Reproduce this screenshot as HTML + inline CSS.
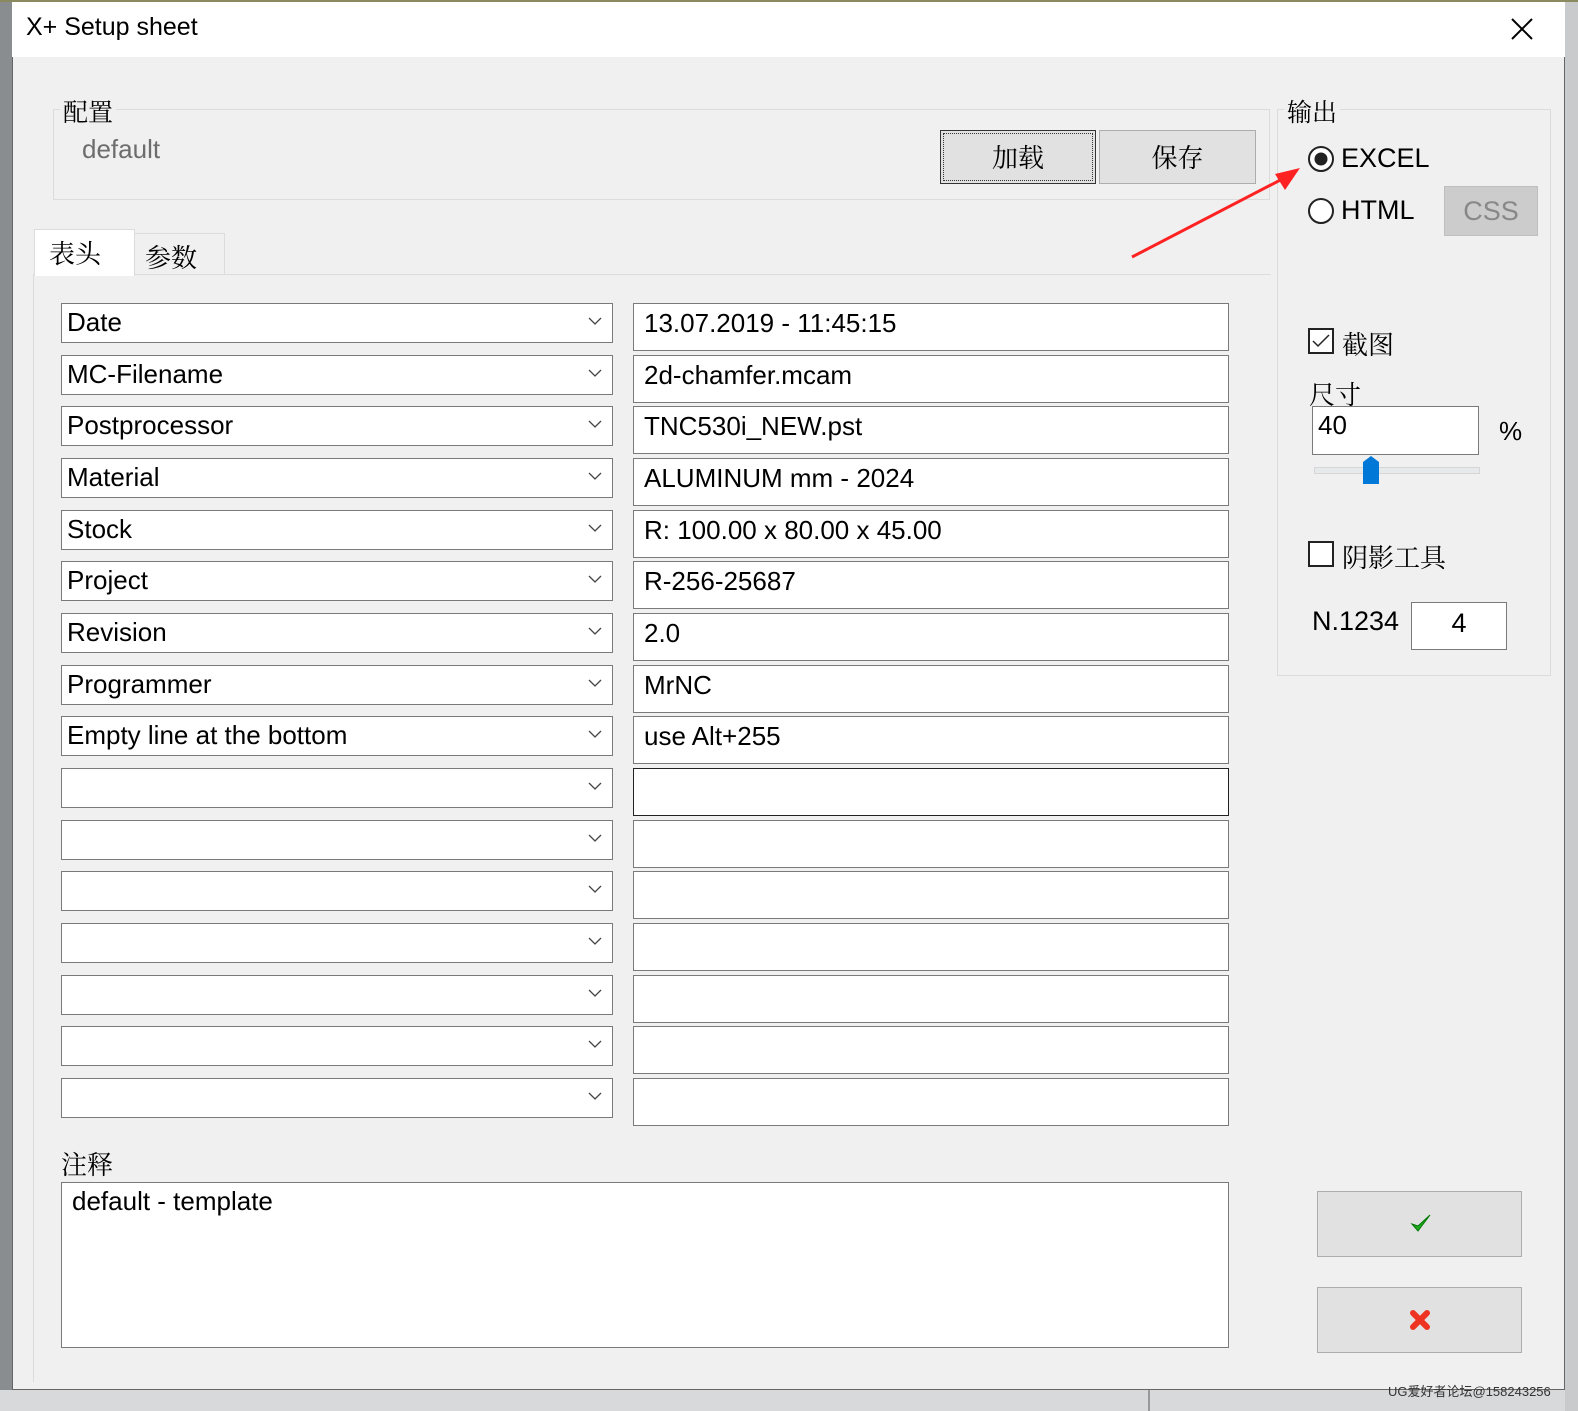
<html><head><style>
body{margin:0;width:1578px;height:1411px;background:#8a8d90;position:relative;overflow:hidden;font-family:"Liberation Sans","Noto Sans CJK SC",sans-serif;}
.a{position:absolute;box-sizing:border-box}
.win{left:12px;top:0;width:1553px;height:1390px;background:#f0f0f0;border:1px solid #666;border-top:none}
.tb{left:12px;top:0;width:1553px;height:57px;background:#fff}
.cb{background:#fff;border:1px solid #7a7a7a;height:40px;width:552px;left:61px;font-size:26px;padding:3px 0 0 5px}
.tx{background:#fff;border:1px solid #7a7a7a;height:48px;width:596px;left:633px;font-size:26px;padding:4px 0 0 10px}
.ar{position:absolute;right:10px;top:12px}
.btn{background:#e1e1e1;border:1px solid #adadad;text-align:center}
.cj{font-family:"Noto Serif CJK SC","Noto Sans CJK SC",serif}
</style></head><body>
<div class="a" style="left:0;top:1390px;width:1578px;height:21px;background:#d8d9da"></div>
<div class="a" style="left:1148px;top:1390px;width:2px;height:21px;background:#999"></div>
<div class="a" style="left:1565px;top:0;width:13px;height:1411px;background:#c8cacc"></div>
<div class="a win"></div>
<div class="a tb"></div>
<div class="a" style="left:0;top:0;width:1578px;height:2px;background:#8b8a5e"></div>
<div class="a" style="left:26px;top:13px;font-size:25px">X+ Setup sheet</div>
<svg class="a" style="left:1510px;top:17px" width="24" height="24"><path d="M2 2L22 22M22 2L2 22" stroke="#000" stroke-width="2"/></svg>
<div class="a" style="left:53px;top:109px;width:1217px;height:91px;border:1px solid #dcdcdc"></div>
<div class="a cj" style="left:60px;top:93px;font-size:25px;background:#f0f0f0;padding:0 3px">配置</div>
<div class="a" style="left:82px;top:134px;font-size:26px;color:#6d6d6d">default</div>
<div class="a btn cj" style="left:940px;top:130px;width:156px;height:54px;font-size:26px;line-height:52px;border:1px solid #333;outline:1px dotted #333;outline-offset:-4px">加载</div>
<div class="a btn cj" style="left:1099px;top:130px;width:157px;height:54px;font-size:26px;line-height:52px">保存</div>
<div class="a" style="left:1277px;top:109px;width:274px;height:567px;border:1px solid #dcdcdc"></div>
<div class="a cj" style="left:1284px;top:93px;font-size:25px;background:#f0f0f0;padding:0 3px">输出</div>
<svg class="a" style="left:1130px;top:160px" width="180" height="100"><path d="M2 97L160 15" stroke="#f22" stroke-width="3"/><path d="M170 8L145 14L155 30Z" fill="#f22"/></svg>
<svg class="a" style="left:1307px;top:145px" width="28" height="28"><circle cx="14" cy="14" r="12" fill="#fff" stroke="#222" stroke-width="2"/><circle cx="14" cy="14" r="6.5" fill="#222"/></svg>
<div class="a" style="left:1341px;top:143px;font-size:27px">EXCEL</div>
<svg class="a" style="left:1307px;top:197px" width="28" height="28"><circle cx="14" cy="14" r="12" fill="#fff" stroke="#222" stroke-width="2"/></svg>
<div class="a" style="left:1341px;top:195px;font-size:27px">HTML</div>
<div class="a" style="left:1444px;top:186px;width:94px;height:50px;background:#ccc;border:1px solid #bfbfbf;color:#888;font-size:27px;text-align:center;line-height:48px">CSS</div>
<svg class="a" style="left:1308px;top:328px" width="27" height="27"><rect x="1" y="1" width="24" height="24" fill="#fff" stroke="#222" stroke-width="2"/><path d="M5 13L10 18L21 7" stroke="#222" stroke-width="1.5" fill="none"/></svg>
<div class="a cj" style="left:1342px;top:325px;font-size:26px">截图</div>
<div class="a cj" style="left:1309px;top:375px;font-size:26px">尺寸</div>
<div class="a" style="left:1312px;top:406px;width:167px;height:49px;background:#fff;border:1px solid #7a7a7a;font-size:26px;padding:3px 0 0 5px">40</div>
<div class="a" style="left:1499px;top:416px;font-size:26px">%</div>
<div class="a" style="left:1314px;top:467px;width:166px;height:7px;background:#e7eaea;border:1px solid #d6d6d6"></div>
<svg class="a" style="left:1362px;top:456px" width="18" height="28"><path d="M1 6L9 0L17 6V28H1Z" fill="#0078d7"/></svg>
<svg class="a" style="left:1308px;top:541px" width="27" height="27"><rect x="1" y="1" width="24" height="24" fill="#fff" stroke="#222" stroke-width="2"/></svg>
<div class="a cj" style="left:1342px;top:538px;font-size:26px">阴影工具</div>
<div class="a" style="left:1312px;top:606px;font-size:27px">N.1234</div>
<div class="a" style="left:1411px;top:602px;width:96px;height:48px;background:#fff;border:1px solid #7a7a7a;font-size:27px;text-align:center;line-height:40px">4</div>
<div class="a" style="left:33px;top:274px;width:1238px;height:1108px;border-top:1px solid #dcdcdc;border-left:1px solid #dcdcdc"></div>
<div class="a" style="left:134px;top:233px;width:91px;height:42px;border:1px solid #dcdcdc;border-bottom:none"></div>
<div class="a cj" style="left:145px;top:238px;font-size:26px">参数</div>
<div class="a" style="left:34px;top:229px;width:101px;height:47px;background:#fff;border:1px solid #dcdcdc;border-bottom:none"></div>
<div class="a cj" style="left:49px;top:234px;font-size:26px">表头</div>
<div class="a" style="left:35px;top:276px;width:1236px;height:1106px;background:#f0f0f0"></div>
<div id="rows"></div>
<script>
var L=["Date","MC-Filename","Postprocessor","Material","Stock","Project","Revision","Programmer","Empty line at the bottom","","","","","","",""];
var R=["13.07.2019 - 11:45:15","2d-chamfer.mcam","TNC530i_NEW.pst","ALUMINUM mm - 2024","R: 100.00 x 80.00 x 45.00","R-256-25687","2.0","MrNC","use Alt+255","","","","","","",""];
var h="";for(var i=0;i<16;i++){var y=Math.round(303+i*51.67);
h+='<div class="a cb" style="top:'+y+'px">'+L[i]+'<svg class="ar" width="14" height="10"><path d="M1 2L7 8L13 2" stroke="#444" fill="none" stroke-width="1.3"/></svg></div>';
h+='<div class="a tx" style="top:'+y+'px'+(i==9?';border-color:#222':'')+'">'+R[i]+'</div>';}
document.getElementById("rows").innerHTML=h;
</script>
<div class="a cj" style="left:61px;top:1145px;font-size:26px">注释</div>
<div class="a" style="left:61px;top:1182px;width:1168px;height:166px;background:#fff;border:1px solid #7a7a7a;font-size:26px;padding:3px 0 0 10px">default - template</div>
<div class="a btn" style="left:1317px;top:1191px;width:205px;height:66px"></div>
<svg class="a" style="left:1410px;top:1212px" width="22" height="22"><path d="M2 12L8 19L20 3L8 14Z" fill="#2a2" stroke="#070" stroke-width="1"/></svg>
<div class="a btn" style="left:1317px;top:1287px;width:205px;height:66px"></div>
<svg class="a" style="left:1409px;top:1309px" width="22" height="22"><path d="M4 4L18 18M18 4L4 18" stroke="#e32" stroke-width="6" stroke-linecap="round"/></svg>
<div class="a" style="left:1388px;top:1381px;font-size:13px;color:#333">UG爱好者论坛@158243256</div>
</body></html>
